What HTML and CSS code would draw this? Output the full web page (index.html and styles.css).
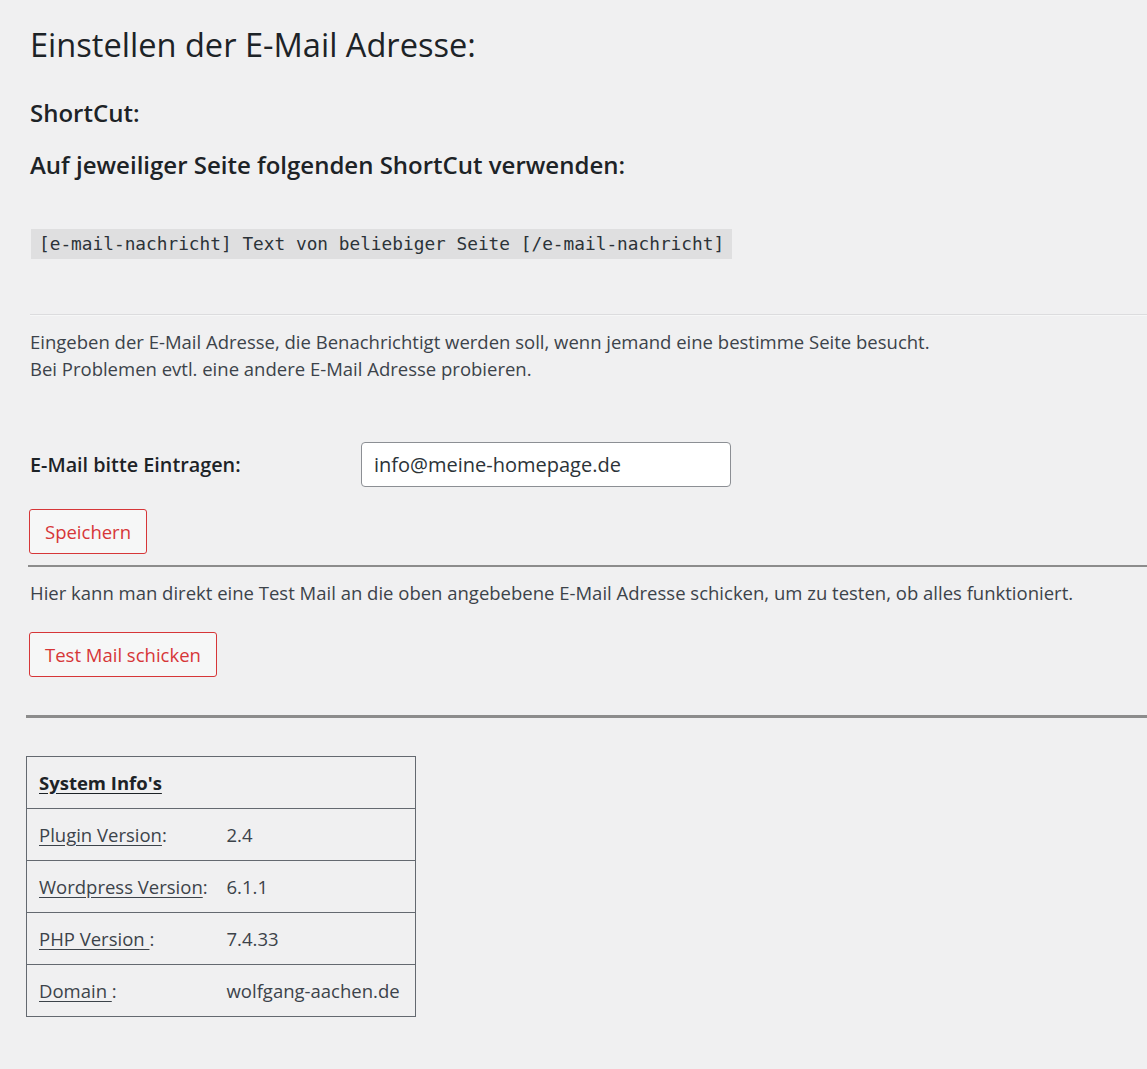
FILE: index.html
```html
<!DOCTYPE html>
<html lang="de">
<head>
<meta charset="utf-8">
<title>E-Mail Nachricht</title>
<link rel="stylesheet" href="styles.css">
</head>
<body>
<div class="wrap">
  <h1 class="title">Einstellen der E-Mail Adresse:</h1>
  <h2 class="sub sub-first">ShortCut:</h2>
  <h2 class="sub">Auf jeweiliger Seite folgenden ShortCut verwenden:</h2>
  <div class="code-row"><code class="code">[e-mail-nachricht] Text von beliebiger Seite [/e-mail-nachricht]</code></div>
  <hr class="hr-light">
  <p class="text">Eingeben der E-Mail Adresse, die Benachrichtigt werden soll, wenn jemand eine bestimme Seite besucht.<br>Bei Problemen evtl. eine andere E-Mail Adresse probieren.</p>
  <div class="field-row">
    <label class="field-label" for="email">E-Mail bitte Eintragen:</label>
    <input class="field-input" id="email" type="text" value="info@meine-homepage.de">
  </div>
  <button class="btn btn-save" type="button">Speichern</button>
  <hr class="hr-mid">
  <p class="text text-test">Hier kann man direkt eine Test Mail an die oben angebebene E-Mail Adresse schicken, um zu testen, ob alles funktioniert.</p>
  <button class="btn btn-test" type="button">Test Mail schicken</button>
  <hr class="hr-thick">
  <table class="info">
    <colgroup><col class="col-k"><col class="col-v"></colgroup>
    <tr><th colspan="2"><u>System Info's</u></th></tr>
    <tr><td class="k"><u>Plugin Version</u>:</td><td class="v">2.4</td></tr>
    <tr><td class="k"><u>Wordpress Version</u>:</td><td class="v">6.1.1</td></tr>
    <tr><td class="k"><u>PHP Version </u>:</td><td class="v">7.4.33</td></tr>
    <tr><td class="k"><u>Domain </u>:</td><td class="v">wolfgang-aachen.de</td></tr>
  </table>
</div>
</body>
</html>
```

FILE: styles.css
```css
html, body {
  margin: 0;
  padding: 0;
  background: #f0f0f1;
}
body {
  font-family: "Open Sans", "Noto Sans", sans-serif;
  color: #3c434a;
  font-size: 18.5px;
}
.wrap {
  padding: 0 0 40px 30px;
  overflow: hidden;
}
.title {
  margin: 23px 0 0;
  font-size: 32.6px;
  line-height: 44px;
  font-weight: 400;
  color: #1d2327;
}
.sub {
  margin: 18px 0 0;
  font-size: 24px;
  line-height: 34px;
  font-weight: 600;
  color: #1d2327;
}
.sub-first {
  margin-top: 29px;
}
.code-row {
  margin-top: 47px;
  height: 30px;
}
.code {
  display: inline-block;
  margin-left: 1px;
  padding: 0 8px;
  height: 30px;
  line-height: 30px;
  background: rgba(0, 0, 0, 0.07);
  font-family: "DejaVu Sans Mono", "Liberation Mono", monospace;
  font-size: 17.8px;
  color: #2c3338;
}
.hr-light {
  margin: 55px 0 0;
  border: 0;
  border-top: 1px solid #dcdcde;
  border-bottom: 1px solid #f6f7f7;
  height: 0;
}
.text {
  margin: 12px 0 0;
  line-height: 27px;
}
.field-row {
  display: flex;
  align-items: center;
  margin-top: 60px;
}
.field-label {
  width: 331px;
  font-size: 19.8px;
  font-weight: 600;
  color: #1d2327;
}
.field-input {
  box-sizing: border-box;
  width: 370px;
  height: 45px;
  margin: 0;
  padding: 0 12px;
  border: 1px solid #8c8f94;
  border-radius: 4px;
  background: #fff;
  font-family: inherit;
  font-size: 20px;
  color: #2c3338;
}
.btn {
  display: block;
  box-sizing: border-box;
  height: 45px;
  margin: 0 0 0 -1px;
  padding: 0 15px;
  border: 1px solid #d63638;
  border-radius: 3px;
  background: #f6f7f7;
  color: #d63638;
  font-family: inherit;
  font-size: 18.5px;
}
.btn-save {
  margin-top: 22px;
}
.hr-mid {
  margin: 11px 0 0 -2px;
  border: 0;
  height: 2px;
  background: #8c8c8c;
}
.text-test {
  margin-top: 12px;
}
.btn-test {
  margin-top: 26px;
}
.hr-thick {
  margin: 38px 0 0 -4px;
  border: 0;
  height: 3px;
  background: #8c8c8c;
}
.info {
  margin: 38px 0 0 -4px;
  border-collapse: collapse;
  table-layout: fixed;
  width: 389px;
  font-size: 18.5px;
  color: #3c434a;
}
.col-k {
  width: 188px;
}
.col-v {
  width: 201px;
}
.info th,
.info td {
  border-top: 1px solid #646970;
  border-bottom: 1px solid #646970;
  height: 52px;
  padding: 0 0 0 12px;
  text-align: left;
  white-space: nowrap;
  box-sizing: border-box;
}
.info th {
  font-weight: 700;
  color: #1d2327;
}
.info tr > :first-child {
  border-left: 1px solid #646970;
}
.info tr > :last-child {
  border-right: 1px solid #646970;
}
.info u {
  text-underline-offset: 3px;
}
```
